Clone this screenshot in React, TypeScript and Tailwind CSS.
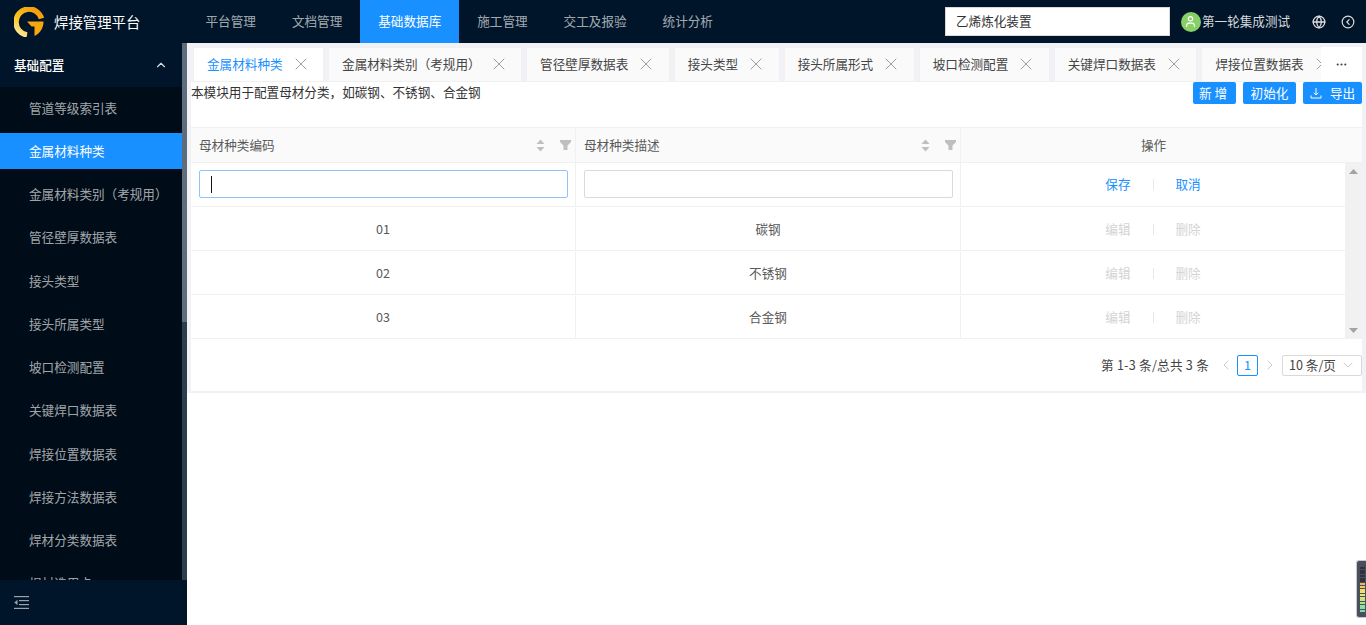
import { ChevronDown, ChevronLeft, ChevronRight, ChevronUp, CircleChevronLeft, Ellipsis, Globe, User, X } from "lucide-react";

const FONT = { fontFamily: '"Noto Sans CJK SC", "Liberation Sans", sans-serif' };

const navItems = ["平台管理", "文档管理", "基础数据库", "施工管理", "交工及报验", "统计分析"];

const menuItems = [
  "管道等级索引表",
  "金属材料种类",
  "金属材料类别（考规用）",
  "管径壁厚数据表",
  "接头类型",
  "接头所属类型",
  "坡口检测配置",
  "关键焊口数据表",
  "焊接位置数据表",
  "焊接方法数据表",
  "焊材分类数据表",
  "焊材选用卡",
];

const tabs = [
  "金属材料种类",
  "金属材料类别（考规用）",
  "管径壁厚数据表",
  "接头类型",
  "接头所属形式",
  "坡口检测配置",
  "关键焊口数据表",
  "焊接位置数据表",
];

const rows = [
  { code: "01", name: "碳钢" },
  { code: "02", name: "不锈钢" },
  { code: "03", name: "合金钢" },
];

const widgetBars = [
  "#2f3340", "#2f3340", "#2f3340", "#2f3340", "#2f3340", "#2f3340",
  "#efb75c", "#f2c966", "#f3d86c", "#f3e072", "#e8e477", "#d6e47e",
  "#bfe485", "#a8e48e", "#92e398", "#82e1a4", "#76e0b0",
];

const Logo = () => (
  <svg width="30" height="30" viewBox="0 0 30 30">
    <defs>
      <linearGradient id="logo-ring" x1="0.8" y1="0" x2="0.1" y2="1">
        <stop offset="0" stopColor="#f59b0c" />
        <stop offset="0.55" stopColor="#fbc31c" />
        <stop offset="1" stopColor="#fde9a0" />
      </linearGradient>
    </defs>
    <path d="M27.5 11.5A13 13 0 1 0 13 27.9" fill="none" stroke="url(#logo-ring)" strokeWidth="5.5" />
    <path d="M13 14.5H29.5C29.6 21 25.5 27 20.5 29V19.5H17.5Z" fill="#f7a70f" />
  </svg>
);

const SortIcon = () => (
  <svg width="9" height="13" viewBox="0 0 9 13" fill="#bfbfbf">
    <path d="M4.5 0.5 8.5 5H0.5Z" />
    <path d="M4.5 12.5 0.5 8H8.5Z" />
  </svg>
);

const FilterIcon = () => (
  <svg width="11" height="10" viewBox="0 0 11 10" fill="#bfbfbf">
    <path d="M0 0H11V2L7.5 5.5V10H3.5V5.5L0 2Z" />
  </svg>
);

const CollapseIcon = () => (
  <svg width="15" height="13" viewBox="0 0 15 13" fill="#9aa3ad">
    <rect x="0" y="0" width="15" height="1.2" />
    <rect x="5" y="4" width="10" height="1.2" />
    <rect x="5" y="8" width="10" height="1.2" />
    <rect x="0" y="11.8" width="15" height="1.2" />
    <path d="M3.5 3.8V9.2L0.3 6.5Z" />
  </svg>
);

const DownloadIcon = () => (
  <svg width="12" height="12" viewBox="0 0 12 12" fill="none" stroke="#fff" strokeWidth="1">
    <path d="M6 1V8M3.8 5.8 6 8 8.2 5.8M1 8.5V11H11V8.5" />
  </svg>
);

const HeaderCell = ({ label }: { label: string }) => (
  <div className="w-[385px] flex items-center pl-[8px] pr-[4px] border-r border-[#f0f0f0]">
    <span className="flex-1">{label}</span>
    <SortIcon />
    <span className="ml-[15px]">
      <FilterIcon />
    </span>
  </div>
);

const Actions = ({ left, right, active }: { left: string; right: string; active?: boolean }) => (
  <div className="flex-1 flex items-center justify-center">
    <span className={active ? "text-[#1890ff]" : "text-[#d4d4d4]"}>{left}</span>
    <span className="w-px h-[11px] bg-[#e8e8e8] mx-[22px]" />
    <span className={active ? "text-[#1890ff]" : "text-[#d4d4d4]"}>{right}</span>
  </div>
);

export default function App() {
  return (
    <div className="relative w-[1366px] h-[625px] overflow-hidden bg-white flex flex-col text-[12.6px]" style={FONT}>
      {/* top bar */}
      <header className="h-[43px] shrink-0 bg-[#001529] flex items-center">
        <div className="w-[187.5px] shrink-0 flex items-center pl-[14px]">
          <Logo />
          <span className="ml-[10px] text-[14.4px] text-white">焊接管理平台</span>
        </div>
        <nav className="flex h-full">
          {navItems.map((item, i) => (
            <div
              key={item}
              className={`h-full px-[18px] flex items-center ${i === 2 ? "bg-[#1890ff] text-white" : "text-[#ffffffa6]"}`}
            >
              {item}
            </div>
          ))}
        </nav>
        <div className="ml-[214px] w-[225px] h-[29px] bg-white border border-[#d9d9d9] flex items-center pl-[10px] text-[#333]">
          乙烯炼化装置
        </div>
        <div className="ml-[11px] w-[20px] h-[20px] rounded-full bg-[#87d068] flex items-center justify-center">
          <User size={13} color="#fff" />
        </div>
        <span className="ml-[1px] text-[#ffffffd9]">第一轮集成测试</span>
        <Globe size={14} color="#dedede" strokeWidth={2.2} className="ml-[22px]" />
        <CircleChevronLeft size={14} color="#dedede" className="ml-[15px]" />
      </header>

      <div className="flex-1 flex min-h-0">
        {/* side menu */}
        <aside className="w-[187px] shrink-0 flex flex-col bg-[#001529]">
          <div className="flex-1 min-h-0 flex">
            <div className="flex-1 min-w-0 overflow-hidden">
              <div className="h-[44px] flex items-center justify-between pl-[14px] pr-[14px] text-white font-medium">
                基础配置
                <ChevronUp size={14} color="#ffffffd9" />
              </div>
              <ul className="bg-[#000c17] pt-[3px]">
                {menuItems.map((item, i) => (
                  <li
                    key={item}
                    className={`h-[36px] mb-[7.25px] pl-[29px] flex items-center ${
                      i === 1 ? "bg-[#1890ff] text-white" : "text-[#ffffffa6]"
                    }`}
                  >
                    {item}
                  </li>
                ))}
              </ul>
            </div>
            <div className="w-[5px] shrink-0 bg-[#2b3d4f]">
              <div className="h-[279px] bg-[#5d6d7e]" />
            </div>
          </div>
          <div className="h-[45px] shrink-0 flex items-center pl-[14px]">
            <CollapseIcon />
          </div>
        </aside>

        {/* content */}
        <main className="flex-1 min-w-0">
          <div className="bg-[#f0f2f5] pt-[4px] px-[4px] pb-[2px]">
            <div className="flex h-[35px] border-b border-[#f0f0f0]">
              <div className="flex-1 min-w-0 overflow-hidden flex pl-[2px] gap-[4px]">
                {tabs.map((tab, i) => (
                  <div
                    key={tab}
                    className={`h-[35px] shrink-0 pl-[13px] pr-[12.5px] flex items-center whitespace-nowrap border border-[#f0f0f0] ${
                      i === 0 ? "bg-white text-[#1890ff] border-b-white" : "bg-[#fafafa] text-[#444]"
                    }`}
                  >
                    {tab}
                    <X size={20} color="#8c8c8c" strokeWidth={1} className="ml-[8px] -mt-[2px]" />
                  </div>
                ))}
              </div>
              <div className="w-[41px] shrink-0 bg-white flex items-center justify-center">
                <Ellipsis size={13} color="#444" />
              </div>
            </div>

            <section className="bg-white">
              <div className="h-[45px] flex items-start justify-between text-[#333]">
                <p className="leading-[20px]">本模块用于配置母材分类，如碳钢、不锈钢、合金钢</p>
                <div className="flex gap-[7px] text-white">
                  <button className="w-[43px] h-[22px] bg-[#1890ff] rounded-[2px] tracking-[3px]">新增</button>
                  <button className="w-[53px] h-[22px] bg-[#1890ff] rounded-[2px]">初始化</button>
                  <button className="w-[59px] h-[22px] bg-[#1890ff] rounded-[2px] flex items-center justify-center gap-[8px]">
                    <DownloadIcon />
                    导出
                  </button>
                </div>
              </div>

              {/* table head */}
              <div className="h-[36px] flex bg-[#fafafa] border-y border-[#f0f0f0] text-[#595959]">
                <HeaderCell label="母材种类编码" />
                <HeaderCell label="母材种类描述" />
                <div className="w-[385px] flex items-center justify-center">操作</div>
              </div>

              {/* table body */}
              <div className="flex text-[#595959]">
                <div className="flex-1 min-w-0">
                  <div className="h-[44px] flex border-b border-[#f0f0f0]">
                    <div className="w-[385px] border-r border-[#f0f0f0] pt-[7px] pl-[8px]">
                      <div className="w-[369px] h-[28px] border border-[#91c4f5] rounded-[2px] flex items-center pl-[11px]">
                        <span className="w-px h-[17px] bg-[#111]" />
                      </div>
                    </div>
                    <div className="w-[385px] border-r border-[#f0f0f0] pt-[7px] pl-[8px]">
                      <div className="w-[369px] h-[28px] border border-[#d9d9d9] rounded-[2px]" />
                    </div>
                    <Actions left="保存" right="取消" active />
                  </div>
                  {rows.map((row) => (
                    <div key={row.code} className="h-[44px] pt-[1px] flex border-b border-[#f0f0f0]">
                      <div className="w-[385px] border-r border-[#f0f0f0] flex items-center justify-center">{row.code}</div>
                      <div className="w-[385px] border-r border-[#f0f0f0] flex items-center justify-center">{row.name}</div>
                      <Actions left="编辑" right="删除" />
                    </div>
                  ))}
                </div>
                <div className="w-[17px] shrink-0 bg-[#f1f1f1] flex flex-col items-center justify-between py-[6px]">
                  <svg width="9" height="5" viewBox="0 0 9 5" fill="#a3a3a3">
                    <path d="M4.5 0 9 5H0Z" />
                  </svg>
                  <svg width="9" height="5" viewBox="0 0 9 5" fill="#a3a3a3">
                    <path d="M4.5 5 0 0H9Z" />
                  </svg>
                </div>
              </div>

              {/* pagination */}
              <div className="h-[52px] flex items-center justify-end text-[#444]">
                <span className="tracking-[0.25px]">第 1-3 条/总共 3 条</span>
                <ChevronLeft size={16} color="#c4c4c4" strokeWidth={1.3} className="ml-[9px]" />
                <span className="ml-[3px] w-[21px] h-[21px] border border-[#1890ff] rounded-[2px] text-[#1890ff] flex items-center justify-center">
                  1
                </span>
                <ChevronRight size={16} color="#c4c4c4" strokeWidth={1.3} className="ml-[4px]" />
                <div className="ml-[4px] w-[80px] h-[21px] border border-[#d9d9d9] rounded-[2px] flex items-center justify-between pl-[6px] pr-[5px]">
                  10 条/页
                  <ChevronDown size={16} color="#bfbfbf" strokeWidth={1.2} />
                </div>
              </div>
            </section>
          </div>
        </main>
      </div>

      {/* page-side widget handle */}
      <div className="absolute right-0 top-[560px] w-[10px] h-[58px] bg-[#4b4f5c] border-l border-y border-[#c8c9cc] rounded-l-[3px] pl-[3px] pt-[6px] flex flex-col gap-[0.7px]">
        {widgetBars.map((color, i) => (
          <span key={i} className="block w-[5px] h-[2px]" style={{ backgroundColor: color }} />
        ))}
      </div>
    </div>
  );
}
